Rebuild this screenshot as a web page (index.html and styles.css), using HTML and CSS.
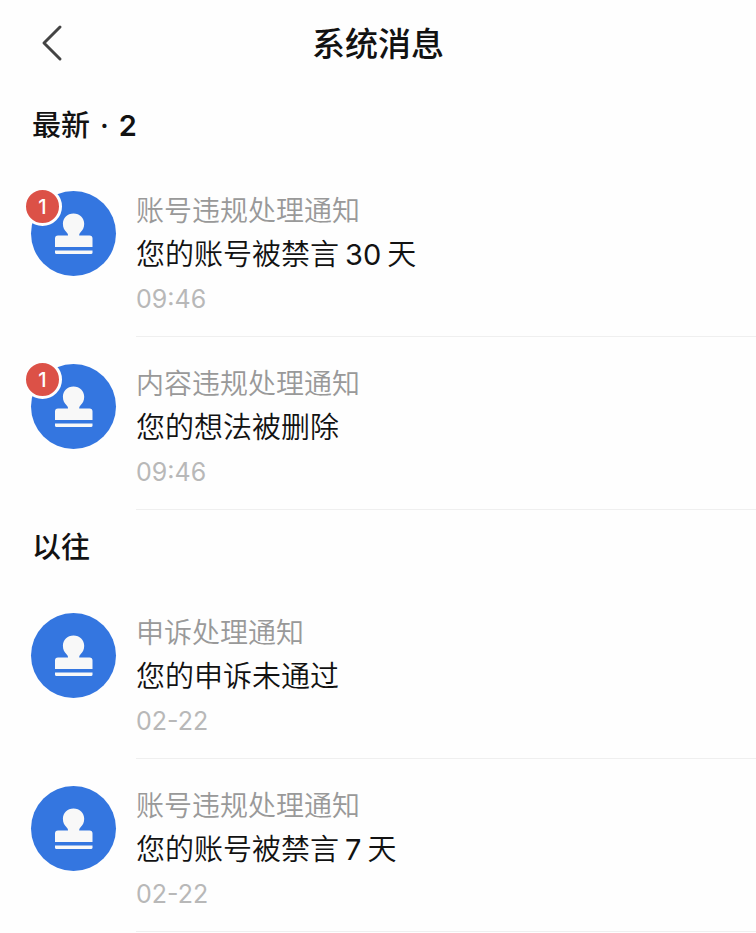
FILE: index.html
```html
<!DOCTYPE html>
<html lang="zh-CN">
<head>
    <meta charset="UTF-8">
    <meta name="viewport" content="width=device-width, initial-scale=1.0">
    <title>系统消息</title>
    <link rel="stylesheet" href="styles.css">
</head>
<body>
    <svg class="defs" aria-hidden="true">
        <symbol id="stamp" viewBox="0 0 85 85">
            <path d="M42.500 22.500c6.200 0 10.700 4.600 10.700 10.300 0 3.900-1.500 6.300-3.600 8.500-1 1.100-1.400 1.900-1.400 3.200H58.500a3 3 0 0 1 3 3V56H24v-8.500a3 3 0 0 1 3-3h10c0-1.300-.5-2.100-1.500-3.200-2.100-2.200-3.600-4.600-3.600-8.500 0-5.700 4.400-10.300 10.600-10.300z"/>
            <path d="M24 59.500h37.500v2a1.500 1.500 0 0 1-1.500 1.500H25.500a1.500 1.500 0 0 1-1.500-1.500z"/>
        </symbol>
    </svg>
    <header class="header">
        <button type="button" class="back" aria-label="返回">
            <svg viewBox="0 0 24 40"><path d="M20 3 4 19l16 16"/></svg>
        </button>
        <h1>系统消息</h1>
    </header>
    <main>
        <section>
            <h2>最新<span class="dot">·</span><span class="count">2</span></h2>
            <div class="item">
                <div class="avatar">
                    <svg><use href="#stamp"/></svg>
                    <span class="badge">1</span>
                </div>
                <div class="content">
                    <p class="type">账号违规处理通知</p>
                    <p class="title">您的账号被禁言<span class="days">30</span>天</p>
                    <p class="time">09:46</p>
                </div>
            </div>
            <div class="item">
                <div class="avatar">
                    <svg><use href="#stamp"/></svg>
                    <span class="badge">1</span>
                </div>
                <div class="content">
                    <p class="type">内容违规处理通知</p>
                    <p class="title">您的想法被删除</p>
                    <p class="time">09:46</p>
                </div>
            </div>
        </section>
        <section>
            <h2>以往</h2>
            <div class="item">
                <div class="avatar">
                    <svg><use href="#stamp"/></svg>
                </div>
                <div class="content">
                    <p class="type">申诉处理通知</p>
                    <p class="title">您的申诉未通过</p>
                    <p class="time">02-22</p>
                </div>
            </div>
            <div class="item">
                <div class="avatar">
                    <svg><use href="#stamp"/></svg>
                </div>
                <div class="content">
                    <p class="type">账号违规处理通知</p>
                    <p class="title">您的账号被禁言<span class="days">7</span>天</p>
                    <p class="time">02-22</p>
                </div>
            </div>
        </section>
    </main>
</body>
</html>
```
FILE: styles.css
```css
body {
    margin: 0;
    background-color: #fefefe;
    color: #121212;
    font-family: Inter, "Noto Sans CJK SC", sans-serif;
}

h1, h2, p {
    margin: 0;
}

.defs {
    display: none;
}

.header {
    display: grid;
    grid-template-columns: 72px 1fr 72px;
    align-items: center;
    height: 88px;
}

.back {
    display: flex;
    justify-content: flex-end;
    padding: 0 8px 0 0;
    border: none;
    background: none;
    cursor: pointer;
}

.back svg {
    width: 24px;
    height: 40px;
    fill: none;
    stroke: #444;
    stroke-width: 3;
    stroke-linecap: round;
    stroke-linejoin: round;
}

h1 {
    text-align: center;
    font-size: 33px;
    font-weight: 500;
    line-height: 48px;
}

h2 {
    padding: 16px 32px;
    font-size: 29px;
    font-weight: 500;
    line-height: 44px;
}

.dot {
    margin: 0 10px;
}

.count {
    font-weight: 600;
}

.item {
    display: flex;
    gap: 20px;
    padding-left: 31px;
}

.avatar {
    position: relative;
    flex: none;
    width: 85px;
    height: 85px;
    margin-top: 27px;
    border-radius: 50%;
    background-color: #3476e0;
}

.avatar svg {
    display: block;
    width: 100%;
    height: 100%;
    fill: #f8f8f8;
}

.badge {
    position: absolute;
    top: -4px;
    left: -8px;
    width: 33px;
    height: 33px;
    border: 3px solid #fefefe;
    border-radius: 50%;
    background-color: #dc5147;
    color: white;
    font-size: 20px;
    font-weight: 500;
    line-height: 34px;
    text-align: center;
}

.content {
    flex: 1;
    padding: 25px 0 15px;
    border-bottom: 1px solid #efefef;
    line-height: 44px;
}

.type {
    color: #999;
    font-size: 28px;
    font-weight: 350;
}

.title {
    font-size: 29px;
    font-weight: 350;
}

.days {
    margin: 0 6px;
    font-weight: 400;
}

.time {
    color: #b8b8b8;
    font-size: 25px;
}
```
